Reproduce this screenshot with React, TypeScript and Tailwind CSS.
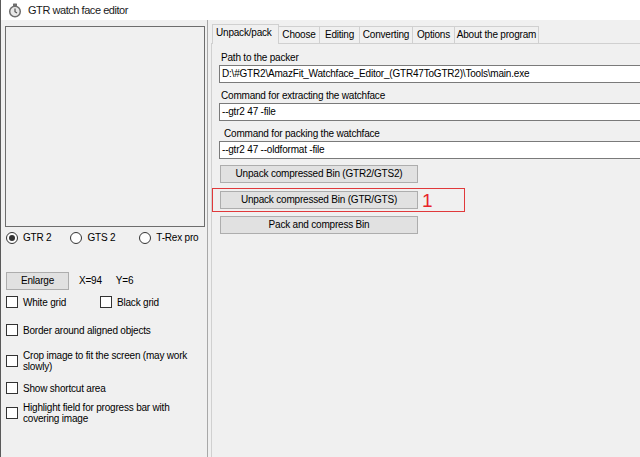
import { ReactNode } from "react";

function Radio({ checked, label }: { checked?: boolean; label: string }) {
  return (
    <div className="flex items-center gap-[5px]">
      <span className="w-[12px] h-[12px] rounded-full border border-[#333] bg-white flex items-center justify-center">
        {checked ? <span className="w-[6px] h-[6px] rounded-full bg-[#333]" /> : null}
      </span>
      <span>{label}</span>
    </div>
  );
}

function Check({ children, className = "" }: { children: ReactNode; className?: string }) {
  return (
    <div className={`flex items-center gap-[5px] ${className}`}>
      <span className="w-[12px] h-[12px] shrink-0 border border-[#333] bg-white" />
      <span className="leading-[11px] whitespace-nowrap">{children}</span>
    </div>
  );
}

function WinButton({ children, className = "" }: { children: ReactNode; className?: string }) {
  return (
    <div
      className={`h-[18px] border border-[#adadad] bg-[#e1e1e1] flex items-center justify-center whitespace-nowrap ${className}`}
    >
      {children}
    </div>
  );
}

function Field({ value }: { value: string }) {
  return (
    <div className="ml-[7px] w-[440px] h-[18px] border border-[#7a7a7a] bg-white flex items-center pl-[2px] whitespace-nowrap">
      {value}
    </div>
  );
}

const tabs = [
  { name: "Choose", w: "w-[41px]" },
  { name: "Editing", w: "w-[40px]" },
  { name: "Converting", w: "w-[53px]" },
  { name: "Options", w: "w-[42px]" },
  { name: "About the program", w: "w-[84px]" },
];

export default function App() {
  return (
    <div className="w-[640px] h-[457px] overflow-hidden bg-[#f0f0f0] border-l border-[#5a5a5a] flex flex-col text-[10px] leading-[12px] tracking-[-0.2px] text-black font-['Liberation_Sans',Arial,sans-serif]">
      {/* title bar */}
      <div className="h-[20px] shrink-0 bg-white flex items-center pl-[7px] gap-[6px]">
        <svg width="14" height="15" viewBox="0 0 14 15">
          <rect x="5" y="0.5" width="4" height="2.5" rx="0.5" fill="#6e6e6e" />
          <circle cx="7" cy="8.5" r="5.3" fill="#e8e8e8" stroke="#6e6e6e" strokeWidth="1.5" />
          <path d="M7 5.5V8.7L9 10" stroke="#555" strokeWidth="1.2" fill="none" />
        </svg>
        <span className="text-[11px] tracking-[-0.45px] text-[#1a1a1a]">GTR watch face editor</span>
      </div>

      <div className="flex flex-1">
        {/* left side: preview and view options */}
        <div className="w-[207px] shrink-0 border-r border-[#a8a8a8] pl-[4px] pt-[6px] flex flex-col">
          <div className="w-[200px] h-[201px] border border-[#6d6d6d] bg-[#f0f0f0]" />

          <div className="mt-[4px] h-[14px] flex items-center pl-[1px]">
            <Radio checked label="GTR 2" />
            <div className="ml-[19px]">
              <Radio label="GTS 2" />
            </div>
            <div className="ml-[24px]">
              <Radio label="T-Rex pro" />
            </div>
          </div>

          <div className="mt-[27px] flex items-center pl-[1px]">
            <WinButton className="w-[63px]">Enlarge</WinButton>
            <span className="ml-[10px]">X=94</span>
            <span className="ml-[14px]">Y=6</span>
          </div>

          <div className="mt-[6px] flex items-center pl-[1px]">
            <Check className="w-[94px]">White grid</Check>
            <Check>Black grid</Check>
          </div>

          <Check className="mt-[16px] pl-[1px]">Border around aligned objects</Check>
          <Check className="mt-[14px] pl-[1px]">
            Crop image to fit the screen (may work
            <br />
            slowly)
          </Check>
          <Check className="mt-[10px] pl-[1px]">Show shortcut area</Check>
          <Check className="mt-[8px] pl-[1px]">
            Highlight field for progress bar with
            <br />
            covering image
          </Check>
        </div>

        {/* right side: tab control */}
        <div className="ml-[3px] flex-1 flex flex-col min-w-0">
          <div className="h-[23px] shrink-0 flex items-end pl-[1px]">
            <div className="w-[67px] h-[20px] border border-b-0 border-[#d0d0d0] bg-[#f0f0f0] pl-[3px] pt-[2px] relative top-[1px]">
              Unpack/pack
            </div>
            {tabs.map((t) => (
              <div
                key={t.name}
                className={`${t.w} h-[17px] border border-b-0 border-l-0 border-[#d0d0d0] bg-[#f0f0f0] flex items-center justify-center whitespace-nowrap`}
              >
                {t.name}
              </div>
            ))}
          </div>

          <div className="flex-1 border-l border-t border-[#d0d0d0] flex flex-col">
            <div className="mt-[7px] ml-[9px] leading-[13px]">Path to the packer</div>
            <div className="mt-[1px]">
              <Field value={"D:\\#GTR2\\AmazFit_Watchface_Editor_(GTR47ToGTR2)\\Tools\\main.exe"} />
            </div>
            <div className="mt-[6px] ml-[9px] leading-[13px]">Command for extracting the watchface</div>
            <div className="mt-[1px]">
              <Field value="--gtr2 47 -file" />
            </div>
            <div className="mt-[6px] ml-[12px] leading-[13px]">Command for packing the watchface</div>
            <div className="mt-[1px]">
              <Field value="--gtr2 47 --oldformat -file" />
            </div>

            <WinButton className="mt-[6px] ml-[8px] w-[198px]">Unpack compressed Bin (GTR2/GTS2)</WinButton>

            <div className="mt-[5px] w-[253px] h-[24px] border border-[#e0393b] flex items-center pl-[7px]">
              <WinButton className="w-[198px]">Unpack compressed Bin (GTR/GTS)</WinButton>
              <span className="ml-[4px] text-[19px] leading-none tracking-normal text-[#e8232a]">1</span>
            </div>

            <WinButton className="mt-[4px] ml-[8px] w-[198px]">Pack and compress Bin</WinButton>
          </div>
        </div>
      </div>
    </div>
  );
}
